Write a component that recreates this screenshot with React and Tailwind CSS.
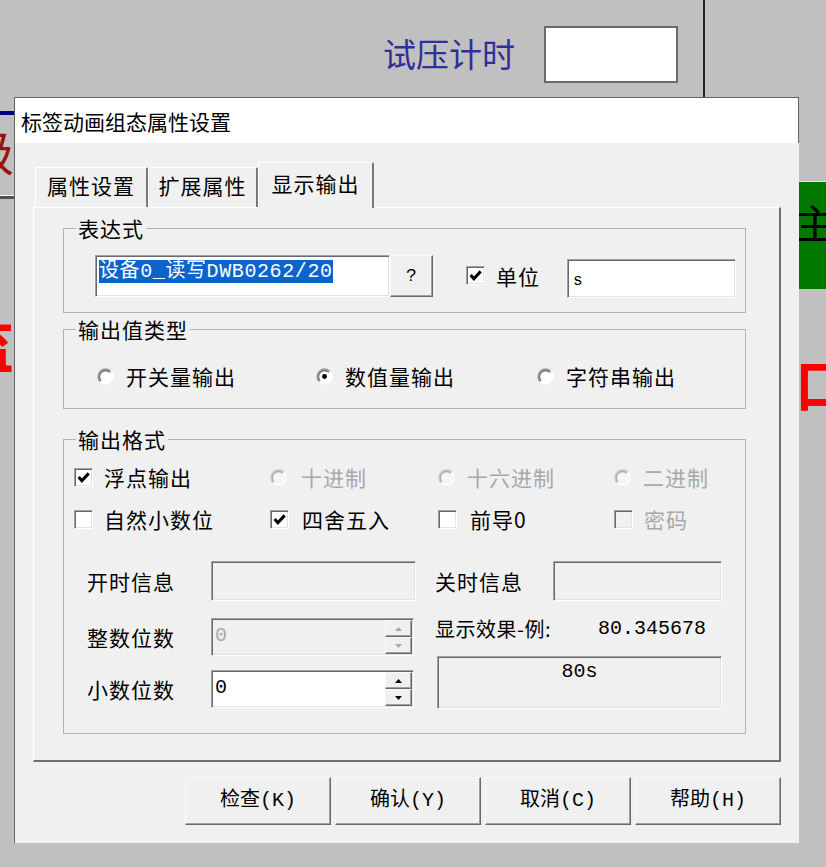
import React from 'react'

const MONO = "font-[family-name:'Liberation_Mono','Noto_Sans_CJK_SC',monospace]"

function Sunken({ className = '', children }) {
  return (
    <div className={`border border-t-[#a0a0a0] border-l-[#a0a0a0] border-r-white border-b-white shadow-[inset_1px_1px_0_#696969,inset_-1px_-1px_0_#e3e3e3] ${className}`}>
      {children}
    </div>
  )
}

function Raised({ className = '', children }) {
  return (
    <div className={`flex items-center justify-center bg-[#f0f0f0] border border-t-[#f8f8f8] border-l-[#f8f8f8] border-r-[#696969] border-b-[#696969] shadow-[inset_-1px_-1px_0_#a0a0a0] ${className}`}>
      {children}
    </div>
  )
}

function Check({ checked, disabled }) {
  return (
    <Sunken className={`w-[19px] h-[19px] shrink-0 flex items-center justify-center ${disabled ? 'bg-[#f0f0f0]' : 'bg-white'}`}>
      {checked && (
        <svg width="13" height="13" viewBox="0 0 12 12">
          <path d="M1.5 5.5 L4.5 9 L10.8 2.2" stroke="#000" strokeWidth="2.8" fill="none" />
        </svg>
      )}
    </Sunken>
  )
}

function Radio({ checked, disabled }) {
  const outer = disabled ? '#c4c4c4' : '#a0a0a0'
  const inner = disabled ? '#b0b0b0' : '#696969'
  return (
    <svg width="17" height="17" viewBox="0 0 16 16" className="shrink-0">
      <circle cx="8" cy="8" r="6.6" fill={disabled ? '#f6f6f6' : '#fff'} />
      <path d="M3 13 A7 7 0 0 1 13 3" stroke={outer} strokeWidth="1.3" fill="none" />
      <path d="M3.9 12.1 A5.8 5.8 0 0 1 12.1 3.9" stroke={inner} strokeWidth="1.3" fill="none" />
      <path d="M13 3 A7 7 0 0 1 3 13" stroke="#fff" strokeWidth="1.3" fill="none" />
      {checked && <circle cx="8" cy="8" r="2.3" fill="#000" />}
    </svg>
  )
}

function Tri({ up, disabled }) {
  return (
    <svg width="7" height="4" viewBox="0 0 7 4">
      <path d={up ? 'M0 4 L3.5 0 L7 4Z' : 'M0 0 L3.5 4 L7 0Z'} fill={disabled ? '#a8a8a8' : '#000'} />
    </svg>
  )
}

function Spin({ value, disabled }) {
  return (
    <Sunken className={`ml-[2px] w-[203px] h-[38px] flex ${disabled ? 'bg-[#f0f0f0]' : 'bg-white'}`}>
      <div className={`flex-1 pl-[3px] pt-[5px] text-[20px] leading-[24px] ${MONO} ${disabled ? 'text-[#a8a8a8]' : 'text-black'}`}>
        {value}
      </div>
      <div className="w-[28px] flex flex-col py-[1px] pr-[1px]">
        <Raised className="flex-1"><Tri up disabled={disabled} /></Raised>
        <Raised className="flex-1"><Tri disabled={disabled} /></Raised>
      </div>
    </Sunken>
  )
}

function Group({ title, className = '', children }) {
  return (
    <fieldset className={`w-[683px] border border-[#b4b4b4] ${className}`}>
      <legend className="ml-[12px] px-[2px] text-[21px] leading-[24px] tracking-[1px]">{title}</legend>
      {children}
    </fieldset>
  )
}

function Tab({ width, active, children }) {
  if (active) {
    return (
      <div className={`${width} h-[46px] pt-[8px] flex justify-center bg-[#f0f0f0] border-t border-l border-white border-r-2 border-r-[#7a7a7a] rounded-t-[2px] text-[21px] leading-[24px] tracking-[1px]`}>
        {children}
      </div>
    )
  }
  return (
    <div className={`${width} h-[40px] mb-px pt-[5px] flex justify-center bg-[#f0f0f0] border-t border-l border-white border-r-2 border-r-[#7a7a7a] rounded-t-[2px] text-[21px] leading-[24px] tracking-[1px]`}>
      {children}
    </div>
  )
}

const buttons = ['检查(K)', '确认(Y)', '取消(C)', '帮助(H)']

export default function App() {
  return (
    <div className="relative w-[826px] h-[867px] overflow-hidden bg-[#c0c0c0] text-black font-[family-name:'Noto_Sans_CJK_SC',sans-serif]">
      {/* screen behind the dialog */}
      <div className="absolute left-[703px] top-0 w-[2px] h-[98px] bg-[#222]" />
      <div className="absolute left-[383px] top-[31px] text-[33px] leading-[44px] text-[#2f2f98]">试压计时</div>
      <div className="absolute left-[544px] top-[26px] w-[134px] h-[57px] bg-white border-2 border-[#6a6a6a]" />
      <div className="absolute left-0 top-[111px] w-[20px] h-[4px] bg-[#000080]" />
      <div className="absolute left-[-34px] top-[122px] text-[48px] leading-[56px] text-[#9c1010]">级</div>
      <div className="absolute left-0 top-[195px] w-[20px] h-px bg-white" />
      <div className="absolute left-0 top-[196px] w-[20px] h-[3px] bg-[#505050]" />
      <div className="absolute left-[-46px] top-[306px] text-[60px] leading-[72px] font-bold text-[#ff0000]">监</div>
      <div className="absolute left-[799px] top-[181px] w-[40px] h-[108px] overflow-hidden bg-[#007800] border-t border-[#d8e8d8]">
        <span className="absolute left-[-4px] top-[16px] text-[40px] leading-[48px] text-black">主</span>
      </div>
      <div className="absolute left-[795px] top-[346px] text-[56px] leading-[72px] font-bold text-[#ff0000]">口</div>

      {/* dialog */}
      <div className="absolute left-[14px] top-[97px] w-[785px] h-[746px] flex flex-col bg-[#f0f0f0] border-l border-t border-[#646464]">
        <div className="h-[45px] shrink-0 flex items-center pl-[6px] bg-white border-r border-[#646464] text-[21px] leading-[28px]">
          标签动画组态属性设置
        </div>

        <div className="pl-[18px] pt-[19px] w-[766px]">
          <div className="relative z-10 -mb-px ml-[2px] flex items-end h-[46px]">
            <Tab width="w-[113px]">属性设置</Tab>
            <Tab width="w-[110px]">扩展属性</Tab>
            <Tab width="w-[116px]" active>显示输出</Tab>
          </div>

          <div className="w-[748px] h-[555px] pl-[29px] pt-[8px] border-t border-l border-white border-r-2 border-b-2 border-r-[#6e6e6e] border-b-[#6e6e6e]">
            <Group title="表达式">
              <div className="flex items-start pl-[31px] pt-[15px] pb-[14px]">
                <Sunken className="w-[295px] h-[42px] bg-white pl-[3px] pt-[2px]">
                  <span className={`${MONO} text-[20px] leading-[24px] tracking-[0.6px] bg-[#0a64cc] text-white`}>设备0_读写DWB0262/20</span>
                </Sunken>
                <Raised className={`w-[43px] h-[42px] ${MONO} text-[18px]`}>?</Raised>
                <div className="ml-[33px] mt-[11px]"><Check checked /></div>
                <div className="ml-[11px] mt-[9px] text-[21px] leading-[24px] tracking-[1px]">单位</div>
                <Sunken className="ml-[27px] mt-[4px] w-[169px] h-[39px] bg-white pl-[5px] pt-[6px]">
                  <span className={`${MONO} text-[16px] leading-[20px]`}>s</span>
                </Sunken>
              </div>
            </Group>

            <Group title="输出值类型" className="mt-[4px]">
              <div className="flex items-center pl-[33px] pt-[23px] pb-[20px] h-[67px] text-[21px] leading-[24px] tracking-[1px]">
                <div className="w-[219px] flex items-center"><Radio /><span className="ml-[12px]">开关量输出</span></div>
                <div className="w-[221px] flex items-center"><Radio checked /><span className="ml-[12px]">数值量输出</span></div>
                <div className="flex items-center"><Radio /><span className="ml-[12px]">字符串输出</span></div>
              </div>
            </Group>

            <Group title="输出格式" className="mt-[18px]">
              <div className="pl-[10px] pt-[12px] text-[21px] leading-[24px] tracking-[1px]">
                <div className="flex items-center h-[28px]">
                  <div className="w-[196px] flex items-center"><Check checked /><span className="ml-[11px]">浮点输出</span></div>
                  <div className="w-[168px] flex items-center text-[#a8a8a8]"><Radio disabled /><span className="ml-[14px]">十进制</span></div>
                  <div className="w-[176px] flex items-center text-[#a8a8a8]"><Radio disabled /><span className="ml-[12px]">十六进制</span></div>
                  <div className="flex items-center text-[#a8a8a8]"><Radio disabled /><span className="ml-[12px]">二进制</span></div>
                </div>
                <div className="flex items-center h-[28px] mt-[14px]">
                  <div className="w-[196px] flex items-center"><Check /><span className="ml-[11px]">自然小数位</span></div>
                  <div className="w-[168px] flex items-center"><Check checked /><span className="ml-[13px]">四舍五入</span></div>
                  <div className="w-[176px] flex items-center"><Check /><span className="ml-[13px]">前导0</span></div>
                  <div className="flex items-center text-[#a8a8a8]"><Check disabled /><span className="ml-[11px]">密码</span></div>
                </div>
              </div>

              <div className="flex pl-[23px] mt-[28px] pb-[24px] text-[21px] leading-[24px] tracking-[1px]">
                <div className="w-[329px] flex flex-col">
                  <div className="flex items-center">
                    <span className="w-[124px]">开时信息</span>
                    <Sunken className="w-[205px] h-[40px] bg-[#f0f0f0]" />
                  </div>
                  <div className="flex items-center mt-[17px]">
                    <span className="w-[122px]">整数位数</span>
                    <Spin value="0" disabled />
                  </div>
                  <div className="flex items-center mt-[14px]">
                    <span className="w-[122px]">小数位数</span>
                    <Spin value="0" />
                  </div>
                </div>

                <div className="ml-[19px] flex flex-col">
                  <div className="flex items-center">
                    <span className="w-[118px]">关时信息</span>
                    <Sunken className="w-[169px] h-[40px] bg-[#f0f0f0]" />
                  </div>
                  <div className="flex mt-[16px] h-[24px]">
                    <span className="w-[163px] text-[20px] tracking-[0.5px]">显示效果-例:</span>
                    <span className={`${MONO} text-[20px] tracking-normal`}>80.345678</span>
                  </div>
                  <Sunken className={`ml-[2px] mt-[15px] w-[285px] h-[53px] bg-[#f0f0f0] pt-[3px] text-center ${MONO} text-[20px] tracking-normal`}>
                    80s
                  </Sunken>
                </div>
              </div>
            </Group>
          </div>

          <div className="w-[748px] flex justify-end gap-[4px] mt-[15px]">
            {buttons.map(b => (
              <Raised key={b} className={`w-[146px] h-[48px] ${MONO} text-[20px]`}>{b}</Raised>
            ))}
          </div>
        </div>
      </div>
    </div>
  )
}
